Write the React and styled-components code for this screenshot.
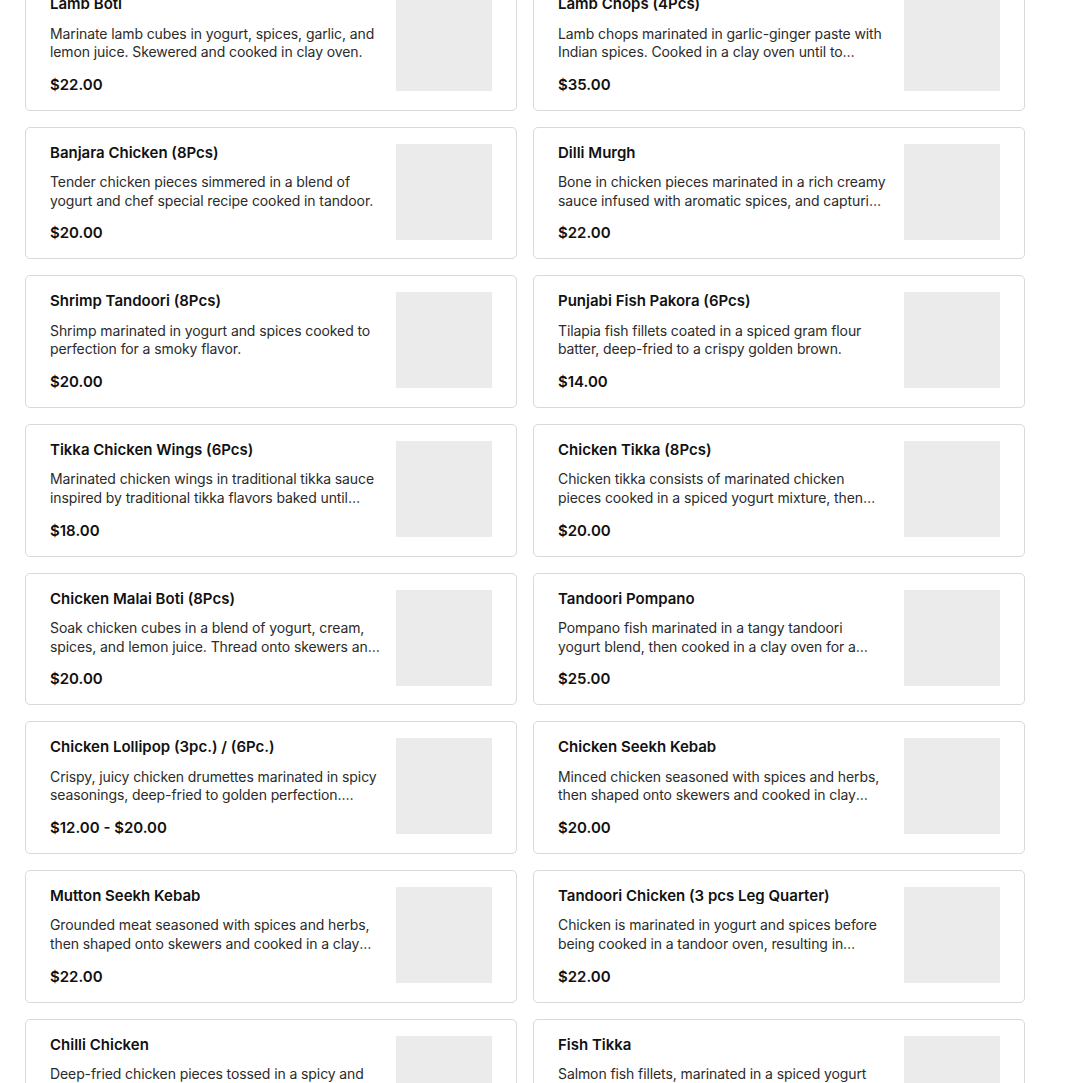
import styled, { createGlobalStyle } from "styled-components";

const items = [
  {
    title: "Lamb Boti",
    desc: "Marinate lamb cubes in yogurt, spices, garlic, and lemon juice. Skewered and cooked in clay oven.",
    price: "$22.00",
  },
  {
    title: "Lamb Chops (4Pcs)",
    desc: "Lamb chops marinated in garlic-ginger paste with Indian spices. Cooked in a clay oven until to perfection.",
    price: "$35.00",
  },
  {
    title: "Banjara Chicken (8Pcs)",
    desc: "Tender chicken pieces simmered in a blend of yogurt and chef special recipe cooked in tandoor.",
    price: "$20.00",
  },
  {
    title: "Dilli Murgh",
    desc: "Bone in chicken pieces marinated in a rich creamy sauce infused with aromatic spices, and capturing the flavors of Delhi.",
    price: "$22.00",
  },
  {
    title: "Shrimp Tandoori (8Pcs)",
    desc: "Shrimp marinated in yogurt and spices cooked to perfection for a smoky flavor.",
    price: "$20.00",
  },
  {
    title: "Punjabi Fish Pakora (6Pcs)",
    desc: "Tilapia fish fillets coated in a spiced gram flour batter, deep-fried to a crispy golden brown.",
    price: "$14.00",
  },
  {
    title: "Tikka Chicken Wings (6Pcs)",
    desc: "Marinated chicken wings in traditional tikka sauce inspired by traditional tikka flavors baked until crispy.",
    price: "$18.00",
  },
  {
    title: "Chicken Tikka (8Pcs)",
    desc: "Chicken tikka consists of marinated chicken pieces cooked in a spiced yogurt mixture, then grilled in a clay oven.",
    price: "$20.00",
  },
  {
    title: "Chicken Malai Boti (8Pcs)",
    desc: "Soak chicken cubes in a blend of yogurt, cream, spices, and lemon juice. Thread onto skewers and grill.",
    price: "$20.00",
  },
  {
    title: "Tandoori Pompano",
    desc: "Pompano fish marinated in a tangy tandoori yogurt blend, then cooked in a clay oven for a smoky finish.",
    price: "$25.00",
  },
  {
    title: "Chicken Lollipop (3pc.) / (6Pc.)",
    desc: "Crispy, juicy chicken drumettes marinated in spicy seasonings, deep-fried to golden perfection. Served hot.",
    price: "$12.00 - $20.00",
  },
  {
    title: "Chicken Seekh Kebab",
    desc: "Minced chicken seasoned with spices and herbs, then shaped onto skewers and cooked in clay oven.",
    price: "$20.00",
  },
  {
    title: "Mutton Seekh Kebab",
    desc: "Grounded meat seasoned with spices and herbs, then shaped onto skewers and cooked in a clay oven.",
    price: "$22.00",
  },
  {
    title: "Tandoori Chicken (3 pcs Leg Quarter)",
    desc: "Chicken is marinated in yogurt and spices before being cooked in a tandoor oven, resulting in smoky, tender meat.",
    price: "$22.00",
  },
  {
    title: "Chilli Chicken",
    desc: "Deep-fried chicken pieces tossed in a spicy and tangy sauce with peppers and onions.",
    price: "$18.00",
  },
  {
    title: "Fish Tikka",
    desc: "Salmon fish fillets, marinated in a spiced yogurt blend and cooked in a clay oven.",
    price: "$22.00",
  },
];

const GlobalStyle = createGlobalStyle`
  html, body {
    margin: 0;
    padding: 0;
    background: #fff;
    overflow: hidden;
  }
  body {
    font-family: Inter, "Liberation Sans", Arial, sans-serif;
    color: #1a1a1a;
  }
`;

const Page = styled.div`
  padding: 0 0 0 25px;
  margin-top: -22px;
`;

const Grid = styled.div`
  width: 1000px;
  display: grid;
  grid-template-columns: 492px 492px;
  gap: 16px;
`;

const Card = styled.div`
  box-sizing: border-box;
  height: 132.67px;
  border: 1px solid #d9d9d9;
  border-radius: 5px;
  padding: 16px 24px 17px;
  display: flex;
  gap: 16px;
  background: #fff;
`;

const Info = styled.div`
  flex: 1;
  min-width: 0;
  display: flex;
  flex-direction: column;
`;

const Title = styled.div`
  margin-top: 1px;
  font-size: 15px;
  font-weight: 600;
  line-height: 16px;
  color: #111;
  white-space: nowrap;
  overflow: hidden;
  text-overflow: ellipsis;
`;

const Desc = styled.div`
  margin-top: 12.5px;
  font-size: 14px;
  letter-spacing: -0.1px;
  line-height: 18.5px;
  max-height: 37px;
  color: #2b2b2b;
  display: -webkit-box;
  -webkit-line-clamp: 2;
  -webkit-box-orient: vertical;
  overflow: hidden;
`;

const Price = styled.div`
  margin-top: auto;
  font-size: 15px;
  font-weight: 600;
  line-height: 16px;
  color: #111;
`;

const Thumb = styled.div`
  flex: none;
  width: 96px;
  height: 96px;
  background: #ebebeb;
`;

export default function App() {
  return (
    <>
      <GlobalStyle />
      <Page>
        <Grid>
          {items.map((item) => (
            <Card key={item.title}>
              <Info>
                <Title>{item.title}</Title>
                <Desc>{item.desc}</Desc>
                <Price>{item.price}</Price>
              </Info>
              <Thumb />
            </Card>
          ))}
        </Grid>
      </Page>
    </>
  );
}
